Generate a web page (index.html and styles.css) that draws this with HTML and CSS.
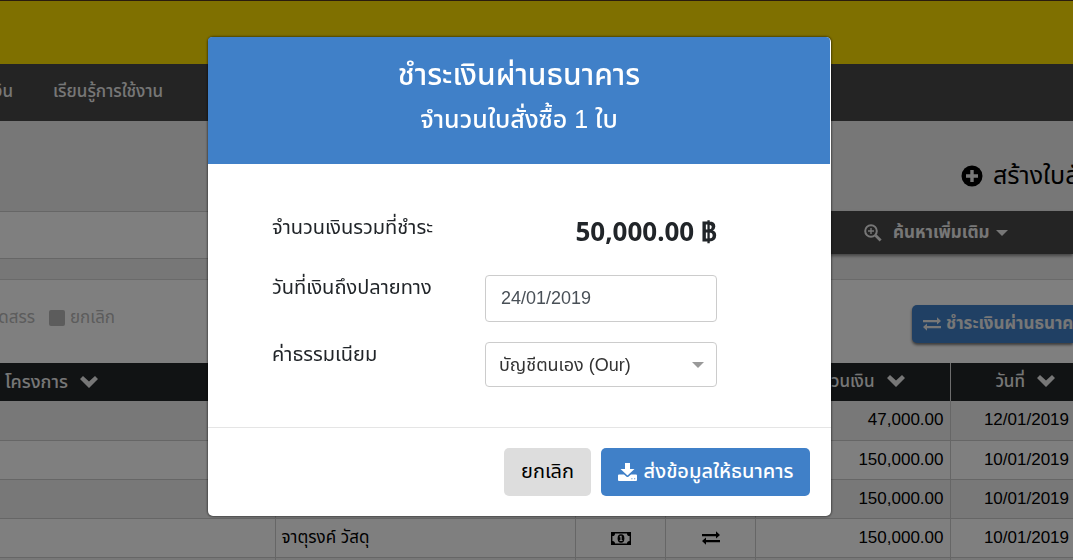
FILE: index.html
```html
<!DOCTYPE html>
<html lang="th">
<head>
<meta charset="utf-8">
<meta name="viewport" content="width=device-width, initial-scale=1">
<title>ชำระเงินผ่านธนาคาร</title>
<link rel="stylesheet" href="styles.css">
</head>
<body>
<svg class="sprite" aria-hidden="true">
  <symbol id="chevron" viewBox="0 0 18 12"><path d="M3 0 9 5.600 15 0 18 3 9 12 0 3z"/></symbol>
  <symbol id="exchange" viewBox="0 0 18 14"><path d="M0 2.900h14V0.300L18 4l-4 3.500V5.200H0zM18 8.900H4V6.500L0 10.100l4 3.600v-2.500H18z"/></symbol>
</svg>

<div class="page">
  <header class="brand"></header>
  <nav class="nav">
    <a class="nav-link" href="#finance">การเงิน</a>
    <a class="nav-link" href="#learn">เรียนรู้การใช้งาน</a>
  </nav>

  <div class="actions">
    <a class="create" href="#create">
      <svg viewBox="0 0 22 22" width="22" height="22" aria-hidden="true"><circle cx="11" cy="11" r="10.500"/><path class="plus" d="M9.300 5h3.400v4.300H17v3.400h-4.300V17H9.300v-4.300H5V9.300h4.300z"/></svg>
      <span>สร้างใบสั่งซื้อ</span>
    </a>
  </div>

  <div class="search">
    <div class="search-field"></div>
    <button class="search-more" type="button">
      <svg viewBox="0 0 18 18" width="18" height="18" aria-hidden="true"><circle cx="7" cy="7" r="5.800" fill="none" stroke="currentColor" stroke-width="2"/><path d="M6.300 4h1.400v2.300H10v1.400H7.700V10H6.300V7.700H4V6.300h2.300z"/><path d="m10.600 12.600 2-2 5 5-2 2z"/></svg>
      <span>ค้นหาเพิ่มเติม</span>
      <i class="caret"></i>
    </button>
  </div>

  <section class="panel">
    <div class="filters">
      <span class="filter-name">จัดสรร</span>
      <i class="swatch"></i>
      <span class="filter-name">ยกเลิก</span>
      <button class="pay" type="button"><svg viewBox="0 0 18 14" width="18" height="14" aria-hidden="true"><use href="#exchange"/></svg><span>ชำระเงินผ่านธนาคาร</span></button>
    </div>
    <table class="orders">
      <colgroup><col class="c-project"><col class="c-vendor"><col class="c-icon"><col class="c-icon"><col class="c-amount"><col class="c-date"></colgroup>
      <thead>
        <tr>
          <th class="left">โครงการ<svg class="chev" viewBox="0 0 18 12" aria-hidden="true"><use href="#chevron"/></svg></th>
          <th></th><th></th><th></th>
          <th class="amount">จำนวนเงิน<svg class="chev" viewBox="0 0 18 12" aria-hidden="true"><use href="#chevron"/></svg></th>
          <th class="date">วันที่<svg class="chev" viewBox="0 0 18 12" aria-hidden="true"><use href="#chevron"/></svg></th>
        </tr>
      </thead>
      <tbody>
        <tr><td></td><td></td><td></td><td></td><td class="num">47,000.00</td><td class="num">12/01/2019</td></tr>
        <tr><td></td><td></td><td></td><td></td><td class="num">150,000.00</td><td class="num">10/01/2019</td></tr>
        <tr><td></td><td></td><td></td><td></td><td class="num">150,000.00</td><td class="num">10/01/2019</td></tr>
        <tr>
          <td></td>
          <td>จาตุรงค์ วัสดุ</td>
          <td class="icon"><svg viewBox="0 0 20 13" width="20" height="13" aria-hidden="true"><path fill-rule="evenodd" d="M0 0h20v13H0zM4 1.400A2.600 2.600 0 0 1 1.400 4v5A2.600 2.600 0 0 1 4 11.600h12A2.600 2.600 0 0 1 18.600 9V4A2.600 2.600 0 0 1 16 1.400z"/><ellipse cx="10" cy="6.500" rx="3.400" ry="4.200"/><path class="cut" d="M9.400 3.800h1.300v4.200h.8v1H8.600V8h.8V5.200h-.8v-.8z"/></svg></td>
          <td class="icon"><svg viewBox="0 0 18 14" width="18" height="14" aria-hidden="true"><use href="#exchange"/></svg></td>
          <td class="num">150,000.00</td><td class="num">10/01/2019</td>
        </tr>
        <tr><td></td><td></td><td></td><td></td><td></td><td></td></tr>
      </tbody>
    </table>
  </section>
</div>

<div class="backdrop">
  <form class="modal" role="dialog" aria-labelledby="dialog-title">
    <header class="modal-head">
      <h1 id="dialog-title">ชำระเงินผ่านธนาคาร</h1>
      <h2>จำนวนใบสั่งซื้อ 1 ใบ</h2>
    </header>
    <div class="modal-body">
      <span class="label">จำนวนเงินรวมที่ชำระ</span>
      <strong class="total">50,000.00 ฿</strong>
      <label class="label" for="due">วันที่เงินถึงปลายทาง</label>
      <input id="due" type="text" value="24/01/2019">
      <label class="label" for="fee">ค่าธรรมเนียม</label>
      <div class="select"><select id="fee"><option>บัญชีตนเอง (Our)</option></select><i class="caret"></i></div>
    </div>
    <footer class="modal-foot">
      <button class="btn cancel" type="button">ยกเลิก</button>
      <button class="btn primary" type="submit"><svg viewBox="0 0 19 18" width="19" height="18" aria-hidden="true"><path d="M7 0h5v6h4.500L9.500 12.600 2.500 6H7z"/><path fill-rule="evenodd" d="M1 11.500h5l2.300 2.100q1.200 1 2.400 0L13 11.500h5q1 0 1 1V17q0 1-1 1H1q-1 0-1-1v-4.500q0-1 1-1zM13.400 15.300v1h1v-1zM16.200 15.300v1h1v-1z"/></svg><span>ส่งข้อมูลให้ธนาคาร</span></button>
    </footer>
  </form>
</div>
</body>
</html>
```
FILE: styles.css
```css
* { box-sizing: border-box; }
body {
  margin: 0;
  background: #fff;
  color: #000;
  font-family: "Liberation Sans", "Noto Sans Thai", "Noto Sans", sans-serif;
  font-size: 17px;
}
button, input, select { font: inherit; }
a { color: inherit; text-decoration: none; }
svg { fill: currentColor; flex: none; }
.sprite { display: none; }
.page { height: 100vh; overflow: hidden; }

.brand { height: 64px; background: #ffe000; border-top: 1px solid #54381c; }
.nav {
  display: flex;
  align-items: center;
  gap: 40px;
  height: 57px;
  margin-left: -40px;
  padding-bottom: 2px;
  background: #484848;
  color: #eee;
}
.nav-link { flex: none; font-weight: 500; }
.nav-link:first-child { display: flex; justify-content: flex-end; width: 53px; white-space: nowrap; }

.actions {
  display: flex;
  justify-content: flex-end;
  align-items: center;
  height: 90px;
  padding-top: 20px;
  background: #eee;
}
.create { display: flex; align-items: center; gap: 10px; width: 112px; white-space: nowrap; font-size: 25px; }
.plus { fill: #eee; }

.search { display: flex; align-items: flex-start; height: 68px; background: #eee; }
.search-field { flex: 1; height: 48px; background: #fff; border: solid #ccc; border-width: 1px 0; }
.search-more {
  display: flex;
  align-items: center;
  gap: 11px;
  width: 273px;
  height: 43px;
  padding: 0 0 0 64px;
  border: 0;
  background: #484848;
  color: #eee;
  font-weight: 700;
  white-space: nowrap;
  box-shadow: 0 2px 3px #888;
}
.search-more .caret { margin-left: -5px; }
.caret { border: 6px solid transparent; border-top-color: currentColor; border-bottom: 0; }

.panel { border-top: 1px solid #d4d4d4; background: #fff; }
.filters { display: flex; align-items: center; height: 83px; padding-bottom: 7px; color: #b8b8b8; white-space: nowrap; }
.filter-name:first-child { display: flex; justify-content: flex-end; width: 35px; }
.swatch { width: 16px; height: 16px; margin: 0 5px 0 14px; border-radius: 2px; background: #b8b8b8; }
.pay {
  display: flex;
  align-items: center;
  gap: 5px;
  flex: none;
  width: 161px;
  height: 38px;
  margin: 12px 0 0 auto;
  padding: 0 0 0 11px;
  border: 0;
  border-radius: 5px 0 0 5px;
  background: #4180c8;
  color: #eee;
  font-weight: 700;
  box-shadow: 0 2px 3px #777;
  overflow: hidden;
}

.orders { width: 100%; border-collapse: collapse; table-layout: fixed; }
.c-vendor { width: 300px; }
.c-icon { width: 90px; }
.c-amount { width: 195px; }
.c-date { width: 123px; }
.c-project { width: auto; }
.orders th { height: 38px; padding: 0 5px; background: #222628; color: #eee; font-weight: 500; white-space: nowrap; }
.orders th.left { text-align: left; font-size: 18px; }
.orders th.amount { padding-right: 45px; text-align: right; border-right: 1px solid #ddd; }
.orders th.date { padding: 0 18px 0 5px; text-align: right; }
.chev { width: 18px; height: 12px; margin-left: 12px; }
.orders td { height: 39px; padding: 0 6px; border: solid #ccc; border-width: 0 1px 1px 0; white-space: nowrap; }
.orders tr:nth-child(odd) td { background: #f0f0f0; }
.orders td:last-child { border-right: 0; padding-right: 4px; }
.orders .num { text-align: right; }
.orders .icon { padding: 0 5px 0 7px; text-align: center; }
.orders td svg { vertical-align: middle; }
.cut { fill: #fff; }

.backdrop {
  position: fixed;
  inset: 0;
  padding: 37px 242px 44px 208px;
  background: rgba(0, 0, 0, .5);
  overflow: hidden;
}
.modal { border-radius: 5px; background: #fff; color: #212529; box-shadow: 0 0 2px 1px rgba(0, 0, 0, .4); }
.modal-head {
  min-height: 127px;
  margin-right: 1px;
  padding: 20px 16px;
  border-radius: 4px 4px 0 0;
  background: #4080c8;
  color: #fff;
  text-align: center;
}
.modal-head h1 { margin: 0 0 8px; font-size: 30px; line-height: 36px; font-weight: 500; }
.modal-head h2 { margin: 0; font-size: 25px; line-height: 36px; font-weight: 500; }
.modal-body {
  display: grid;
  grid-template-columns: 1fr 232px;
  row-gap: 20px;
  padding: 48px 114px 40px 64px;
}
.label { font-size: 20px; line-height: 24px; white-space: nowrap; }
.modal-body > .label:first-child { padding-top: 3px; }
.total { height: 43px; padding-top: 4px; font-family: "Noto Sans", sans-serif; font-size: 26px; line-height: 30px; text-align: right; }
input, .select { width: 100%; border: 1px solid #ccc; border-radius: 4px; background: #fff; font-size: 18px; }
input { height: 47px; padding: 0 15px; color: #495057; }
.select { display: flex; align-items: center; height: 45px; padding-right: 12px; color: #999; }
select { flex: 1; min-width: 0; height: 100%; padding: 0 0 0 13px; border: 0; background: none; color: #333; appearance: none; }
.modal-foot { display: flex; justify-content: flex-end; gap: 10px; padding: 20px 21px; border-top: 1px solid #e5e5e5; }
.btn { display: flex; align-items: center; justify-content: center; height: 48px; padding: 0; border: 0; border-radius: 5px; font-size: 20px; white-space: nowrap; }
.cancel { width: 87px; background: #ddd; color: #000; }
.primary { gap: 7px; width: 209px; background: #4080c8; color: #fff; font-weight: 500; }
```
